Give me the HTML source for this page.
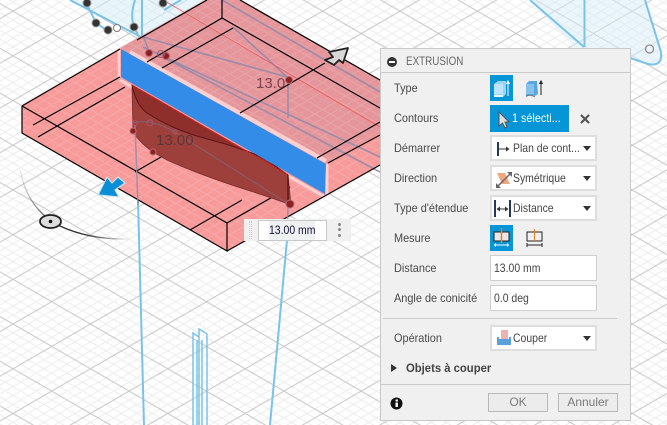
<!DOCTYPE html>
<html><head><meta charset="utf-8"><style>
html,body{margin:0;padding:0;width:667px;height:425px;overflow:hidden;background:#fff;font-family:"Liberation Sans",sans-serif}
#v{position:absolute;left:0;top:0}
.p{position:absolute;left:380px;top:48px;width:249px;height:371px;background:#f0f0f0;border:1px solid #c9c9c9;color:#444;font-size:12px}
.a{position:absolute;white-space:nowrap}
.l{left:13px;line-height:14px;color:#4a4a4a;transform:scaleX(.91);transform-origin:0 50%}
.s{position:absolute;left:109px;width:103px;height:22px;background:#fff;border:2px solid #dedede;line-height:22px;color:#444}
.s span{position:absolute;left:21px;white-space:nowrap;transform:scaleX(.87);transform-origin:0 50%}
.s i{position:absolute;right:4px;top:9px;border-left:4px solid transparent;border-right:4px solid transparent;border-top:5px solid #333}
.s svg{position:absolute;left:2px;top:1px}
.t{position:absolute;left:109px;width:105px;height:24px;background:#fff;border:1px solid #cfcfcf;line-height:24px;font-size:12px;color:#444}
.t span{position:absolute;left:3px;transform:scaleX(.87);transform-origin:0 50%;white-space:nowrap}
.b{position:absolute;left:109px;width:23px;height:26px;background:#0696d7}
.btn{position:absolute;top:344px;height:17px;border:1px solid #b9b9b9;background:#ececec;color:#7a7a7a;text-align:center;line-height:17px;font-size:12px}
</style></head><body>
<svg id="v" width="667" height="425" viewBox="0 0 667 425">
<defs>
<pattern id="g" width="77.4" height="44.7" viewBox="0 0 78 45" patternUnits="userSpaceOnUse" patternTransform="translate(51.7 33.5)">
<path d="M0 9L78 54M0 -36L78 9M0 18L78 63M0 -27L78 18M0 27L78 72M0 -18L78 27M0 36L78 81M0 -9L78 36M0 36L78 -9M0 81L78 36M0 27L78 -18M0 72L78 27M0 18L78 -27M0 63L78 18M0 9L78 -36M0 54L78 9" stroke="#ececec" stroke-width="1" fill="none"/>
<path d="M0 0L78 45M0 45L78 0" stroke="#c6c6c6" stroke-width="1" fill="none"/>
</pattern>
<linearGradient id="arc" x1="0" y1="0" x2="1" y2="0"><stop offset="0" stop-color="#333" stop-opacity=".1"/><stop offset=".3" stop-color="#333"/><stop offset=".6" stop-color="#333"/><stop offset="1" stop-color="#333" stop-opacity="0"/></linearGradient>
</defs>
<rect width="667" height="425" fill="#fff"/>
<rect width="667" height="425" fill="url(#g)"/>
<!-- sketch fills -->
<path d="M70 0H205L143 36L134 31Z" fill="#d6eefa" fill-opacity=".55"/>
<path d="M530 0H645L662 55Q662 67 648 64L630 58H584Z" fill="#d6eefa" fill-opacity=".5"/>
<g fill="none" stroke="#79c3ea" stroke-width="2">
<path d="M70 0L143 38M85 0L96 23L108 31M181 0L164 10M135 0Q130 15 134 27L143 45M142 0V40"/>
<path d="M530 0L584 47M584.500 0V47M645 0L661 52Q663 67 648 64L630 58"/>
<path d="M138 200L144 425M287 240L270 425"/>
</g>
<g fill="none" stroke="#79c3ea" stroke-width="1.500">
<path d="M193 425V333L199 337V425M199 425V329L207 334V425M197 340V425M202 340V425"/>
</g>
<circle cx="649.500" cy="49" r="4" fill="#eef6fb" stroke="#8b8b8b" stroke-width="1.300"/>
<!-- bottom plate -->
<path d="M22 105L205 0H240L380 80V165L227 251L22 133Z" fill="#f99a9a"/>
<!-- raised block -->
<path d="M205 0H240L380 80V133L327 163L120 48Z" fill="#e6969a"/>
<path d="M22 105L205 0H240L380 80V165L227 251L22 133Z" fill="url(#g)" opacity=".18"/>
<!-- sketch ghost -->
<g fill="none" stroke="#8d89ab" stroke-width="1.600" opacity=".85">
<path d="M143 36L150 53M143 37L287 77M233 27L287 77M143 47L380 157M222 0L380 92M163 57L380 172M288 80V118"/>
</g>
<path d="M146 -10L380 127" stroke="#ef5a5f" stroke-width=".8" fill="none"/>
<!-- highlight edges -->
<path d="M130 52L326 161" fill="none" stroke="#ffd0d0" stroke-width="4"/>
<path d="M119 48V79" fill="none" stroke="#ffd0d0" stroke-width="2.500"/>
<path d="M327 164V195" fill="none" stroke="#ffd0d0" stroke-width="3"/>
<path d="M120 80L325 197" fill="none" stroke="#ffd0d0" stroke-width="3"/>
<!-- black edges -->
<g fill="none" stroke="#000" stroke-width="1.200">
<path d="M22 106L120 49M137 40L207 0M22 106V133L227 251V223L22 106M227 251L380 165M227 223L290 187M240 0L380 80M222 0V18L147 62M222 18L380 108M233 28L162 68M33 125L120 77M38 137L125 87M135 172L208 130M190 230L242 200M240 113L325 63M317 158L380 122M328 163L380 135"/>
</g>
<!-- dark section -->
<path d="M132 85L288 175L291 205Q270 197 247 190Q200 175 167 160L153 152Q140 143 133 132Z" fill="#9d403b" stroke="#7a2c2c" stroke-width=".8"/>
<path d="M132 85Q136 105 147 113Q170 128 200 137Q250 150 267 160L288 175Z" fill="#8f2f2c"/>
<path d="M132 85Q136 105 147 113Q170 128 200 137Q250 150 267 160L288 175" fill="none" stroke="#5c1518" stroke-width="1"/>
<path d="M133 123Q150 118 175 132Q235 170 290 205" fill="none" stroke="#86606f" stroke-width="1"/>
<path d="M132 85L288 175" stroke="#e22" stroke-width="1" stroke-dasharray="2 1"/>
<path d="M288 175V204" stroke="#4d0f12" stroke-width="1.200"/>
<path d="M135 125L138 205M288 206L287 240" stroke="#8d89ab" stroke-width="1.500" opacity=".8"/>
<!-- blue face -->
<path d="M121 49L326 164L325 194L121 77Z" fill="#348ce9"/>
<!-- dots -->
<g fill="#333" stroke="#999" stroke-width="1">
<circle cx="87" cy="3" r="4"/><circle cx="96" cy="23" r="4"/><circle cx="108" cy="30" r="4"/><circle cx="134" cy="27" r="4"/><circle cx="163" cy="3" r="4"/>
</g>
<circle cx="117" cy="28" r="3.500" fill="#fff" stroke="#777"/>
<g fill="#8c1f24" stroke="#b76b6d" stroke-width="1">
<circle cx="149" cy="53" r="3.500"/><circle cx="166" cy="56" r="3.500"/><circle cx="289" cy="80" r="3.500"/><circle cx="133" cy="131" r="3"/><circle cx="153" cy="152" r="3"/><circle cx="290" cy="204" r="4"/>
</g>
<circle cx="161" cy="54" r="3.500" fill="none" stroke="#a56"/>
<circle cx="135" cy="123" r="2.500" fill="none" stroke="#a56"/>
<circle cx="150" cy="123" r="3" fill="none" stroke="#a56"/>
<circle cx="175" cy="132" r="2" fill="none" stroke="#a56"/>
<text x="256" y="88" font-family="Liberation Sans" font-size="15" fill="#7f4450">13.0</text>
<text x="156" y="145" font-family="Liberation Sans" font-size="15" fill="#5f3436">13.00</text>
<!-- arrows -->
<path d="M348 48L329 52L333 57L325 60L334 65L339 60L343 63Z" fill="#d8d8d8" stroke="#222" stroke-width="1.800" stroke-linejoin="round"/>
<path d="M98 195L107 177L112 183L118 177L125 183L115 190L119 197Z" fill="#0a8fd6" stroke="#cfe6f3" stroke-width="1.200" stroke-linejoin="round"/>
<!-- manipulator -->
<path d="M20 170Q28 210 60 226Q90 240 130 239" fill="none" stroke="url(#arc)" stroke-width="1.300"/>
<ellipse cx="50.500" cy="221.500" rx="10.500" ry="6.500" fill="#ddd" stroke="#222" stroke-width="1.800"/>
<circle cx="50.500" cy="221.500" r="1.800" fill="#111"/>
</svg>
<!-- dim input -->
<div class="a" style="left:244px;top:219px;width:107px;height:22px;background:#f0f0f0"></div>
<div class="a" style="left:249px;top:221px;width:1px;height:18px;border-left:1px dotted #ccc;border-right:1px dotted #ccc"></div>
<div class="a" style="left:258px;top:220px;width:67px;height:19px;background:#fff;border:1px solid #c8c8c8;font-size:12px;line-height:19px;color:#113"><span class="a" style="left:10px;background:#eef0f2;transform:scaleX(.87);transform-origin:0 50%">13.00 mm</span></div>
<div class="a" style="left:338px;top:223px;width:3px;height:3px;background:#888;border-radius:2px;box-shadow:0 5px 0 #888,0 11px 0 #888"></div>
<!-- panel -->
<div class="p">
<svg class="a" style="left:5px;top:7px" width="12" height="12"><circle cx="6" cy="6" r="5" fill="#333"/><rect x="3" y="5" width="6" height="2" fill="#fff"/></svg>
<div class="a" style="left:25px;top:5px;line-height:14px;color:#666;font-size:12px;transform:scaleX(.82);transform-origin:0 50%">EXTRUSION</div>
<div class="a" style="left:0;top:23px;width:249px;height:1px;background:#c9c9c9"></div>
<div class="a l" style="top:32px">Type</div>
<div class="a l" style="top:62px">Contours</div>
<div class="a l" style="top:92px">Démarrer</div>
<div class="a l" style="top:122px">Direction</div>
<div class="a l" style="top:152px">Type d'étendue</div>
<div class="a l" style="top:182px">Mesure</div>
<div class="a l" style="top:212px">Distance</div>
<div class="a l" style="top:242px">Angle de conicité</div>
<div class="a l" style="top:282px">Opération</div>
<!-- type -->
<div class="b" style="top:26px"><svg width="23" height="26"><path d="M4 9L8 6H16V19L13 22H4Z" fill="#9fd3f5"/><path d="M4 9H13V19H4Z" fill="#bfe3fa"/><path d="M4 20H13V22H4Z" fill="#eaf6fd"/><path d="M18 21V7M16.500 9L18 6L19.500 9" stroke="#fff" fill="#fff"/></svg></div>
<svg class="a" style="left:142px;top:26px" width="24" height="26"><path d="M3 9L6 6H14L15 19L12 21Q8 19 3 22Z" fill="#5aa7e0"/><path d="M3 9H11V19H3Z" fill="#86c1ec"/><path d="M3 21Q8 19 12 22" stroke="#777" fill="none"/><path d="M18 20V7M16.500 9L18 6L19.500 9" stroke="#222" fill="#222"/></svg>
<!-- contours -->
<div class="a" style="left:109px;top:56px;width:79px;height:27px;background:#0696d7;color:#fff;line-height:27px;font-size:12px"><span class="a" style="left:22px;transform:scaleX(.9);transform-origin:0 50%">1 sélecti...</span>
<svg class="a" style="left:7px;top:5px" width="14" height="20"><path d="M2 2V16L5.500 13L8 18L10 17L8 12L12 12Z" fill="#ddd" stroke="#555"/></svg></div>
<svg class="a" style="left:198px;top:64px" width="12" height="12"><path d="M2 2L10 10M10 2L2 10" stroke="#555" stroke-width="2.200"/></svg>
<!-- selects -->
<div class="s" style="top:86px"><svg width="20" height="20"><path d="M4 4V18" stroke="#1f3864" stroke-width="2"/><path d="M5 11H13" stroke="#333"/><path d="M12 8.500L15.500 11L12 13.500Z" fill="#333"/></svg><span>Plan de cont...</span><i></i></div>
<div class="s" style="top:116px"><svg width="20" height="20"><path d="M3 5H11L16 16H8Z" fill="#f2a77e"/><path d="M3 19L17 5" stroke="#666" stroke-width="1.500"/><path d="M13 4H18V9ZM2 15V20H7Z" fill="#666"/></svg><span>Symétrique</span><i></i></div>
<div class="s" style="top:146px"><svg width="20" height="20" style="left:1px"><path d="M2 2V19M17 2V19" stroke="#1f3864" stroke-width="2"/><path d="M4 11H15" stroke="#333"/><path d="M7 8.500L3.500 11L7 13.500ZM12 8.500L15.500 11L12 13.500Z" fill="#333"/></svg><span>Distance</span><i></i></div>
<!-- mesure -->
<div class="b" style="top:176px"><svg width="23" height="26"><rect x="4" y="7" width="15" height="9" fill="#e8e8e8" stroke="#222"/><path d="M11.500 3V18" stroke="#ec7a2a" stroke-width="1.500"/><path d="M4 20H19" stroke="#fff"/><path d="M6 18L4 20L6 22ZM17 18L19 20L17 22Z" fill="#fff"/></svg></div>
<svg class="a" style="left:142px;top:176px" width="23" height="26"><rect x="4" y="7" width="15" height="9" fill="#f0f0f0" stroke="#222"/><path d="M11.500 4V16" stroke="#ec7a2a"/><path d="M4 20H19M4 18V22M19 18V22" stroke="#222"/></svg>
<div class="t" style="top:206px"><span>13.00 mm</span></div>
<div class="t" style="top:236px"><span>0.0 deg</span></div>
<div class="a" style="left:2px;top:269px;width:234px;height:1px;background:#c9c9c9"></div>
<div class="s" style="top:276px"><svg width="20" height="20"><rect x="7" y="2" width="7" height="10" fill="#eeb0b0"/><path d="M3 9V17H17V9H15V11H5V9Z" fill="#5aa0d8"/></svg><span>Couper</span><i></i></div>
<div class="a" style="left:10px;top:315px;border-top:4.500px solid transparent;border-bottom:4.500px solid transparent;border-left:6px solid #333"></div>
<div class="a" style="left:25px;top:312px;font-weight:bold;line-height:14px;color:#444;font-size:12px;transform:scaleX(.94);transform-origin:0 50%">Objets à couper</div>
<div class="a" style="left:0;top:335px;width:249px;height:1px;background:#c9c9c9"></div>
<svg class="a" style="left:9px;top:348px" width="13" height="13"><circle cx="6.500" cy="6.500" r="6" fill="#111"/><rect x="5.500" y="5.500" width="2.400" height="4.500" fill="#fff"/><rect x="5.500" y="2.500" width="2.400" height="2" fill="#fff"/></svg>
<div class="btn" style="left:107px;width:58px">OK</div>
<div class="btn" style="left:177px;width:58px">Annuler</div>
</div>
</body></html>
